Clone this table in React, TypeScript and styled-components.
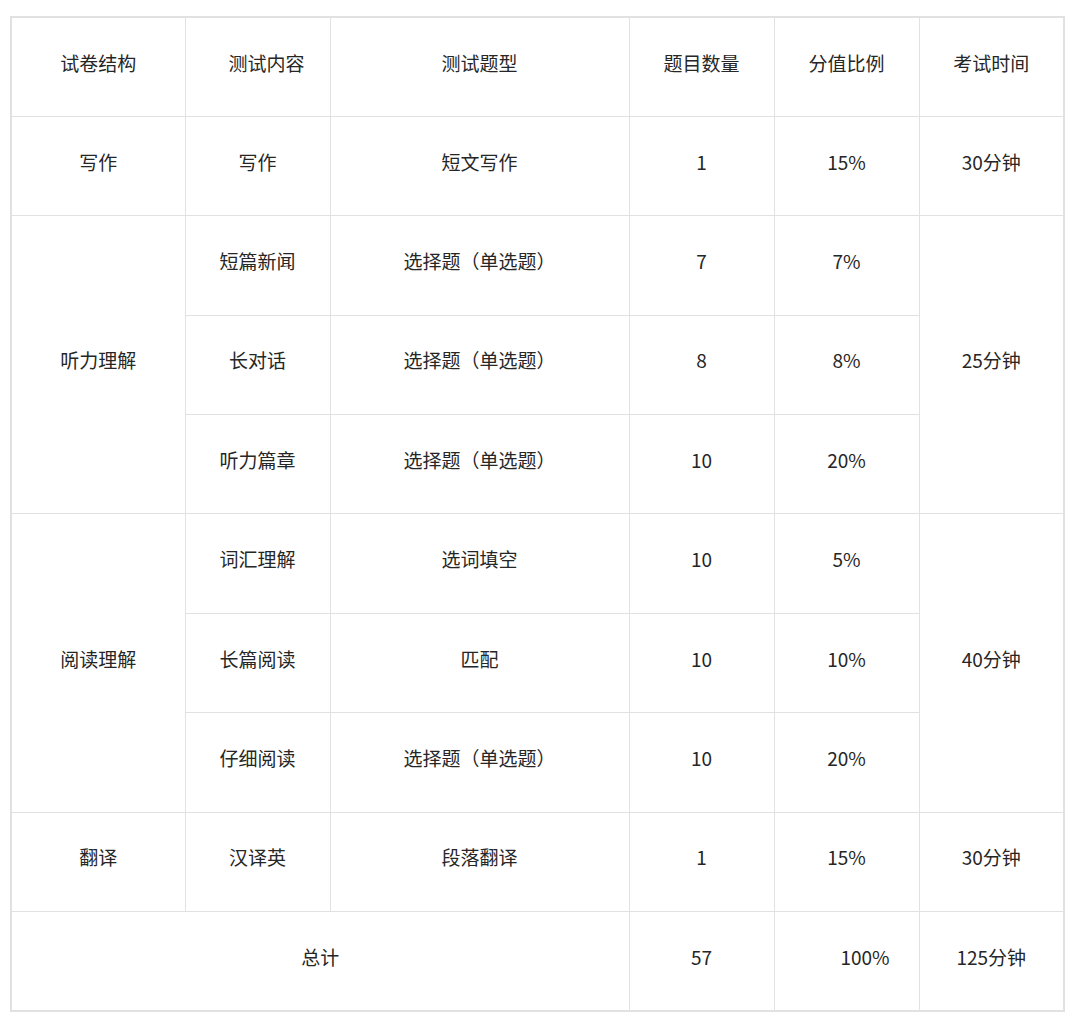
import styled, { createGlobalStyle } from "styled-components";

const GlobalStyle = createGlobalStyle`
	html, body {
		margin: 0;
		padding: 0;
		background: #ffffff;
	}
`;

type Cell = {
	text: string;
	rowSpan?: number;
	colSpan?: number;
	shift?: number;
};

const widths = [174, 145, 299, 145, 145, 145];

const header = ["试卷结构", "测试内容", "测试题型", "题目数量", "分值比例", "考试时间"];

const rows: Cell[][] = [
	[
		{ text: "写作" },
		{ text: "写作" },
		{ text: "短文写作" },
		{ text: "1" },
		{ text: "15%" },
		{ text: "30分钟" },
	],
	[
		{ text: "听力理解", rowSpan: 3 },
		{ text: "短篇新闻" },
		{ text: "选择题（单选题）" },
		{ text: "7" },
		{ text: "7%" },
		{ text: "25分钟", rowSpan: 3 },
	],
	[{ text: "长对话" }, { text: "选择题（单选题）" }, { text: "8" }, { text: "8%" }],
	[{ text: "听力篇章" }, { text: "选择题（单选题）" }, { text: "10" }, { text: "20%" }],
	[
		{ text: "阅读理解", rowSpan: 3 },
		{ text: "词汇理解" },
		{ text: "选词填空" },
		{ text: "10" },
		{ text: "5%" },
		{ text: "40分钟", rowSpan: 3 },
	],
	[{ text: "长篇阅读" }, { text: "匹配" }, { text: "10" }, { text: "10%" }],
	[{ text: "仔细阅读" }, { text: "选择题（单选题）" }, { text: "10" }, { text: "20%" }],
	[
		{ text: "翻译" },
		{ text: "汉译英" },
		{ text: "段落翻译" },
		{ text: "1" },
		{ text: "15%" },
		{ text: "30分钟" },
	],
	[
		{ text: "总计", colSpan: 3 },
		{ text: "57" },
		{ text: "100%", shift: 37 },
		{ text: "125分钟" },
	],
];

export default function App() {
	return (
		<>
			<GlobalStyle />
			<Page>
				<Table>
					<colgroup>
						{widths.map((w, i) => (
							<Col key={i} $w={w} />
						))}
					</colgroup>
					<tbody>
						<Row>
							{header.map((h, i) => (
								<Td key={h} $shift={i === 1 ? 18 : 0}>
									{h}
								</Td>
							))}
						</Row>
						{rows.map((row, r) => (
							<Row key={r}>
								{row.map((c, i) => (
									<Td key={i} rowSpan={c.rowSpan} colSpan={c.colSpan} $shift={c.shift ?? 0}>
										{c.text}
									</Td>
								))}
							</Row>
						))}
					</tbody>
				</Table>
			</Page>
		</>
	);
}

const Page = styled.div`
	padding: 16px 0 0 10px;
	width: 1080px;
	height: 1019px;
	box-sizing: border-box;
`;

const Table = styled.table`
	width: 1054px;
	table-layout: fixed;
	border-collapse: collapse;
	border: 2px solid #e1e1e1;
	font-family: "Noto Sans CJK SC", "Noto Sans", sans-serif;
	font-size: 19px;
	color: #262626;
`;

const Col = styled.col<{ $w: number }>`
	width: ${(p) => p.$w}px;
`;

const Row = styled.tr`
	height: 99.4px;
`;

const Td = styled.td<{ $shift: number }>`
	border: 1px solid #e1e1e1;
	text-align: center;
	vertical-align: middle;
	padding: 0 0 8px ${(p) => p.$shift}px;
	line-height: 1.2;
`;
